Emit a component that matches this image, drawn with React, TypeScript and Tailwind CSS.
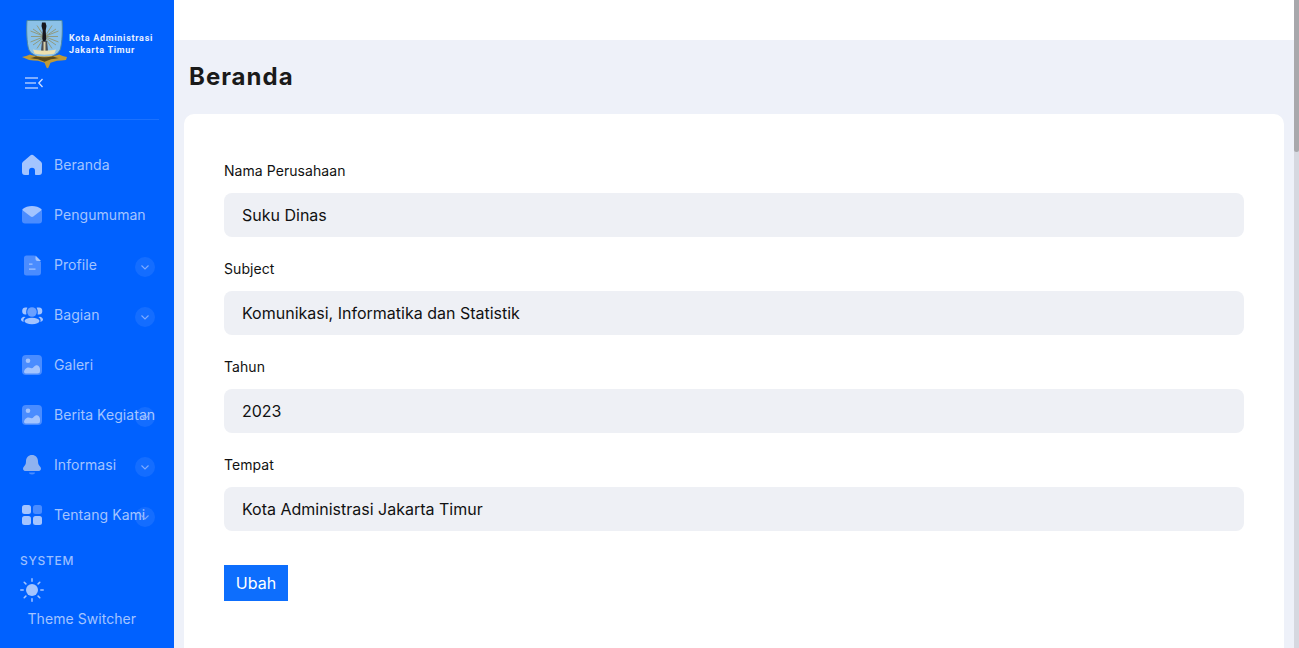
import React from 'react'

const LIGHT = '#a3c4ff'
const DARK = '#4a8cff'

const HomeIcon = () => (
  <svg width="22" height="22" viewBox="0 0 22 22">
    <path fill={LIGHT} d="M9 1.700a3 3 0 0 1 4 0l6.700 5.700c.8.700 1.300 1.600 1.300 2.600v8a3 3 0 0 1-3 3h-3.200a.8.8 0 0 1-.8-.8v-3.400a3 3 0 0 0-6 0v3.400a.8.8 0 0 1-.8.800H4a3 3 0 0 1-3-3v-8c0-1 .5-1.900 1.300-2.600z" />
  </svg>
)

const MailIcon = () => (
  <svg width="22" height="22" viewBox="0 0 22 22">
    <rect x="1" y="5" width="20" height="14.500" rx="3" fill={DARK} />
    <path fill={LIGHT} d="M1.700 5C4 3 7.500 2 11 2s7 1 9.300 3c.5.500.4 1-.2 1.500L12.300 12.500c-.8.600-1.800.6-2.600 0L1.900 6.500C1.300 6 1.200 5.500 1.700 5z" />
  </svg>
)

const FileIcon = () => (
  <svg width="22" height="22" viewBox="0 0 22 22">
    <path fill={DARK} d="M5.500 1.500h8l6.500 6.500v10.500a3 3 0 0 1-3 3H5.500a2.500 2.500 0 0 1-2.500-2.500V4a2.500 2.500 0 0 1 2.500-2.500z" />
    <path fill={LIGHT} d="M14.500 1.500 20 7h-3.500a2 2 0 0 1-2-2z" />
    <path fill={LIGHT} d="M8 9.500h3.500v1.200H8zM8 14.500h6.500v1.200H8z" />
  </svg>
)

const UsersIcon = () => (
  <svg width="24" height="22" viewBox="0 0 24 22">
    <circle cx="12" cy="8" r="4.800" fill="#6aa0ff" />
    <path fill={LIGHT} d="M6 3.500c.6 0 1 .1 1.400.3-.8 1.200-1.200 2.600-1.200 4.200 0 .8.100 1.500.3 2.200-.4.200-.7.300-1.100.3A3.500 3.500 0 0 1 6 3.500zM18 3.500c-.6 0-1 .1-1.400.3.800 1.200 1.200 2.600 1.200 4.200 0 .8-.1 1.500-.3 2.200.4.200.7.300 1.100.3a3.500 3.500 0 0 0 .4-7z" />
    <ellipse cx="12" cy="17" rx="7.500" ry="3.200" fill={LIGHT} />
    <path fill={LIGHT} d="M3.800 12.800C2 13.400 1 14.500 1 15.500c0 1 1.100 1.900 2.700 2.400-.2-.4-.3-.8-.3-1.200 0-1.500.8-2.800 2.200-3.700zM20.200 12.800c1.800.6 2.800 1.700 2.800 2.700s-1.100 1.900-2.700 2.400c.2-.4.3-.8.3-1.200 0-1.500-.8-2.800-2.200-3.700z" />
  </svg>
)

const ImageIcon = () => (
  <svg width="22" height="22" viewBox="0 0 22 22">
    <rect x="1" y="1" width="20" height="20" rx="4" fill={DARK} />
    <circle cx="7" cy="6.800" r="2.300" fill={LIGHT} />
    <path fill={LIGHT} d="M3 18c0-1.500 1.500-3.500 3-4.200 1.500-.7 3 .2 4.500.5 1.500.3 2.500-2.300 4.500-3 2-.7 4 1.500 4 3.700v2a2.500 2.500 0 0 1-2.500 2.500H5A2 2 0 0 1 3 18z" />
  </svg>
)

const BellIcon = () => (
  <svg width="22" height="22" viewBox="0 0 22 22">
    <path fill="#8fb2f0" d="M11 1c3.500 0 6 2.700 6 6.200 0 3 .9 4 2 5.300.6.700 1 1.400 1 2.200 0 1.600-1.500 2.300-3 2.300H5c-1.500 0-3-.7-3-2.300 0-.8.400-1.500 1-2.200 1.100-1.300 2-2.300 2-5.300C5 3.700 7.500 1 11 1z" />
    <path fill={DARK} d="M8 18.500h6c0 1.200-1.200 2-3 2s-3-.8-3-2z" />
  </svg>
)

const GridIcon = () => (
  <svg width="22" height="22" viewBox="0 0 22 22">
    <rect x="1" y="1" width="9" height="9" rx="2.500" fill={LIGHT} />
    <rect x="12" y="1" width="9" height="9" rx="2.500" fill={DARK} />
    <rect x="1" y="12" width="9" height="9" rx="2.500" fill={LIGHT} />
    <rect x="12" y="12" width="9" height="9" rx="2.500" fill={LIGHT} />
  </svg>
)

const SunIcon = () => (
  <svg width="24" height="24" viewBox="0 0 24 24">
    <circle cx="12" cy="12" r="6" fill={LIGHT} />
    <g stroke={LIGHT} strokeWidth="1.500" strokeLinecap="round">
      <path d="M12 0.800v2.400M12 20.800v2.400M0.800 12h2.400M20.800 12h2.400M4.200 4.200l1.700 1.700M18.100 18.100l1.700 1.700M4.200 19.800l1.700-1.700M18.100 5.900l1.700-1.700" />
    </g>
  </svg>
)

const MenuIcon = () => (
  <svg width="18" height="12" viewBox="0 0 18 12" fill="none" strokeWidth="1.600">
    <path stroke="#a8c6ff" d="M0 1h13M0 6h11M0 11h13" />
    <path stroke="#cfe0ff" strokeWidth="1.300" d="M17.500 2 13.800 6l3.700 4" />
  </svg>
)

const Chevron = () => (
  <span className="absolute left-[115px] top-1/2 mt-[2px] flex h-5 w-5 -translate-y-1/2 items-center justify-center rounded-full bg-[#ffffff14]">
    <svg width="10" height="10" viewBox="0 0 10 10" fill="none" stroke="#7fabff" strokeWidth="1.100">
      <path d="M1.500 3.500 5 7l3.500-3.500" />
    </svg>
  </span>
)

const Logo = () => (
  <svg width="47" height="49" viewBox="0 0 47 49" className="shrink-0">
    <path d="M6 .500h35c.6 6 .6 23-2 29.500-2.500 5-10 7-15.500 9.500C18 37 10.500 35 8 30 5.400 23.500 5.400 6.500 6 .500z" fill="#8cc2e8" stroke="#4b86a8" strokeWidth="1" />
    <g stroke="#8f9a80" strokeWidth="1">
      <path d="M10 16.500h27M12 9l23 16M35 9 12 25M9.500 22l28-11M37.500 22 9.500 11M16 5.500l15 23M31 5.500l-15 23" />
    </g>
    <path d="M21 2.500h3.500l1 3.500-.8 4.500.5 8-.7 3h-2.500l-.7-3 .4-8-1.200-4.500z" fill="#17161c" />
    <path d="M21 21h5l1 10h-7z" fill="#4a4f55" />
    <path d="M22.500 22h2v9h-2z" fill="#d8cfa8" />
    <path d="M12 29.500c5 1.500 18 1.500 23 0l-1.500 4c-5 1.500-15 1.500-20 0z" fill="#ece0b0" />
    <path d="M1 37c3-.5 5.500-1.600 8-2.500 5 2.500 24 2.500 29 0 2.500.9 5 2 8 2.500l-1 3c-3 .5-6 .5-9 .7l-6.500 2-2 4.800c-.5 1-1.500 1-2 0l-2-4.800-6.500-2c-3-.2-6-.2-9-.7z" fill="#c09a36" />
    <path d="M9 38c3-.3 4.500-1 6-1.800 5 1.300 12 1.300 17 0 1.500.8 3 1.500 6 1.800-2.500.5-5.500.8-8 1.300l-6.500 2.400-6.500-2.400c-2.500-.5-5.500-.8-8-1.300z" fill="#5a4a1c" />
  </svg>
)

const menu = [
  { label: 'Beranda', icon: <HomeIcon /> },
  { label: 'Pengumuman', icon: <MailIcon /> },
  { label: 'Profile', icon: <FileIcon />, chevron: true },
  { label: 'Bagian', icon: <UsersIcon />, chevron: true },
  { label: 'Galeri', icon: <ImageIcon /> },
  { label: 'Berita Kegiatan', icon: <ImageIcon />, chevron: true },
  { label: 'Informasi', icon: <BellIcon />, chevron: true },
  { label: 'Tentang Kami', icon: <GridIcon />, chevron: true },
]

const fields = [
  { label: 'Nama Perusahaan', value: 'Suku Dinas' },
  { label: 'Subject', value: 'Komunikasi, Informatika dan Statistik' },
  { label: 'Tahun', value: '2023' },
  { label: 'Tempat', value: 'Kota Administrasi Jakarta Timur' },
]

const Sidebar = () => (
  <aside className="flex h-full w-[174px] shrink-0 flex-col bg-[#0061ff] pl-5 pr-[15px]">
    <div className="flex h-[49px] mt-5 items-start pl-[1px]">
      <Logo />
      <div className="ml-px mt-[12px] font-['Roboto',sans-serif] text-[9px] font-bold leading-[12px] tracking-[0.700px] text-[#e8f0ff] whitespace-nowrap">
        <div>Kota Administrasi</div>
        <div>Jakarta Timur</div>
      </div>
    </div>
    <div className="mt-[8px] h-[42px] pl-[5px]">
      <MenuIcon />
    </div>
    <div className="h-px bg-[#ffffff1a]" />
    <nav className="mt-5 flex flex-col">
      {menu.map(item => (
        <div key={item.label} className="relative flex h-[50px] items-center">
          <span className="flex w-[24px] shrink-0 justify-center">{item.icon}</span>
          <span className="ml-[10px] whitespace-nowrap text-sm font-normal tracking-[0.060px] text-[#a3c4ff]">{item.label}</span>
          {item.chevron && <Chevron />}
        </div>
      ))}
    </nav>
    <div className="mt-[13px] text-xs font-medium leading-4 tracking-[0.700px] text-[#9bbfff]">SYSTEM</div>
    <div className="mt-[9px]">
      <SunIcon />
    </div>
    <div className="mt-[7px] pl-[7.500px] text-sm font-normal tracking-[0.060px] text-[#a3c4ff] whitespace-nowrap">Theme Switcher</div>
  </aside>
)

const Field = ({ label, value }: { label: string; value: string }) => (
  <div className="mb-[22px]">
    <div className="mb-[12px] text-sm font-normal leading-[20px] tracking-[0.060px] text-[#111111]">{label}</div>
    <div className="flex h-11 items-center rounded-lg bg-[#eef0f5] px-[18px] text-base text-[#111111]">{value}</div>
  </div>
)

export default function App() {
  return (
    <div className="flex h-screen w-full overflow-hidden font-['Inter',sans-serif]">
      <Sidebar />
      <div className="flex min-w-0 flex-1 flex-col bg-[#eef1f9]">
        <div className="h-10 shrink-0 bg-white" />
        <h1 className="ml-[15px] mt-[20px] text-2xl font-bold leading-[34px] tracking-[1px] text-[#1a1a1a]">Beranda</h1>
        <main className="ml-[10px] mr-[10px] mt-[20px] flex-1 rounded-t-[10px] bg-white px-10 pt-[47px]">
          {fields.map(field => (
            <Field key={field.label} {...field} />
          ))}
          <button type="button" className="mt-3 h-9 w-16 bg-[#0d6efd] text-base text-white">
            Ubah
          </button>
        </main>
      </div>
      <div className="h-full w-[5px] shrink-0 bg-[#d6d8e0]">
        <div className="h-[152px] rounded-b-sm bg-[#a8a8ac]" />
      </div>
    </div>
  )
}
